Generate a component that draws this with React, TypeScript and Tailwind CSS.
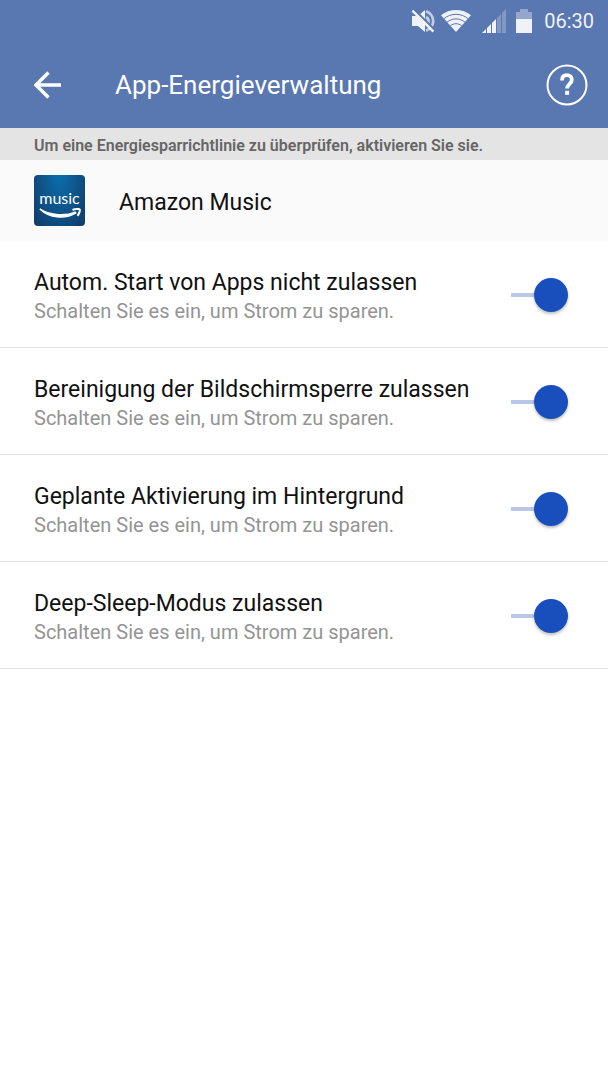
import { useState } from "react";

type PolicyId = "autostart" | "lockscreen" | "wakeup" | "deepsleep";

type Policy = {
  id: PolicyId;
  title: string;
};

const policies: Policy[] = [
  { id: "autostart", title: "Autom. Start von Apps nicht zulassen" },
  { id: "lockscreen", title: "Bereinigung der Bildschirmsperre zulassen" },
  { id: "wakeup", title: "Geplante Aktivierung im Hintergrund" },
  { id: "deepsleep", title: "Deep-Sleep-Modus zulassen" },
];

function MutedIcon() {
  return (
    <svg aria-hidden="true" viewBox="0 0 24 24" className="h-6 w-6">
      <path d="M1 7h6l7-6v22l-7-6H1z" fill="#f0f2f7" />
      <g fill="none" stroke="#c3cde2">
        <path d="M15 8a4.500 4.500 0 0 1 0 8" strokeWidth="3" />
        <path d="M15 2.400a10 10 0 0 1 0 19.200" strokeWidth="2.800" />
      </g>
      <path d="M3 .200 24 21.200" stroke="#5977b0" strokeWidth="2" />
      <path d="M1.400 1.600 22.400 22.600" stroke="#f0f2f7" strokeWidth="2.400" />
    </svg>
  );
}

function WifiIcon() {
  return (
    <svg aria-hidden="true" viewBox="0 0 30 22" className="h-[22px] w-[30px]">
      <path d="M15 22 0 5.200C8.500-1.700 21.500-1.700 30 5.200z" fill="#f0f2f7" />
      <g fill="none" stroke="#5977b0" strokeWidth="1">
        <path d="M3 8.600c7-5.700 17-5.700 24 0" />
        <path d="M6 12.200c5.300-4.400 12.700-4.400 18 0" />
        <path d="M9.300 15.800c3.400-2.800 8-2.800 11.400 0" />
      </g>
    </svg>
  );
}

function SignalIcon() {
  return (
    <svg aria-hidden="true" viewBox="0 0 24 24" className="h-6 w-6">
      <path d="M0 24l4-4v4zM5 19l4-4v9H5zM10 14l4-4v14h-4z" fill="#f0f2f7" />
      <path d="M15 9l4-4v19h-4zM20 4l4-4v24h-4z" fill="#8399c5" />
    </svg>
  );
}

function BatteryIcon() {
  return (
    <svg aria-hidden="true" viewBox="0 0 16 24" className="h-6 w-4">
      <path d="M0 3h4V0h8v3h4v7H0z" fill="#93a6cd" />
      <path d="M0 10h16v14H0z" fill="#f0f2f7" />
    </svg>
  );
}

function BackIcon() {
  return (
    <svg
      aria-hidden="true"
      viewBox="0 0 28 28"
      className="h-7 w-7"
      fill="none"
      stroke="currentColor"
      strokeWidth="3.400"
    >
      <path d="M27 14H3M14.500 1.500 2 14l12.500 12.500" />
    </svg>
  );
}

function HelpIcon() {
  return (
    <svg
      aria-hidden="true"
      viewBox="0 0 42 42"
      className="h-[42px] w-[42px]"
      fill="none"
      stroke="currentColor"
    >
      <circle cx="21" cy="21" r="19.500" strokeWidth="2" />
      <path
        d="M16 16.400c0-3.600 2-5.200 4.900-5.200s4.900 1.700 4.900 4.500c0 4-4.700 4.600-4.700 8.700"
        strokeWidth="3.800"
      />
      <path d="M19.100 26.800h4v4h-4z" fill="currentColor" stroke="none" />
    </svg>
  );
}

function MusicLogo() {
  return (
    <div className="flex h-[51px] w-[51px] flex-col items-center rounded-[4px] bg-radial-[at_50%_0%] from-[#0a6fae] to-[#123a66] pt-[13px]">
      <span className="font-[Lato,sans-serif] text-[16px] leading-5 text-white">
        music
      </span>
      <svg
        aria-hidden="true"
        viewBox="0 0 42 11"
        className="h-[11px] w-[42px]"
        fill="none"
        stroke="#fff"
      >
        <path
          d="M.800 1C10 10 26 11.800 37 5l-.8-1C26 8.400 12 7.400.800 1z"
          fill="#fff"
          strokeWidth="1.200"
        />
        <path
          d="M33.500 2c3-1.300 6.700-1.300 7.200-.5s-.4 4-2.200 6.300"
          strokeWidth="2"
        />
      </svg>
    </div>
  );
}

function StatusBar() {
  return (
    <div className="flex h-[42px] items-center justify-end pr-[14px] text-[#f0f2f7]">
      <MutedIcon />
      <span className="ml-[6px]">
        <WifiIcon />
      </span>
      <span className="ml-[11px]">
        <SignalIcon />
      </span>
      <span className="ml-[10px]">
        <BatteryIcon />
      </span>
      <span className="ml-3 text-[20px] leading-6">06:30</span>
    </div>
  );
}

type PolicyRowProps = {
  policy: Policy;
  checked: boolean;
  onChange: (checked: boolean) => void;
};

function PolicyRow({ policy, checked, onChange }: PolicyRowProps) {
  return (
    <li className="flex items-center justify-between border-b border-[#e2e2e2] pt-6 pr-10 pb-[22px] pl-[34px]">
      <div className="min-w-0 pt-1">
        <label
          htmlFor={policy.id}
          className="block text-[23px] leading-7 text-[#111]"
        >
          {policy.title}
        </label>
        <p
          id={`${policy.id}-hint`}
          className="text-[20px] leading-7 text-[#949494]"
        >
          Schalten Sie es ein, um Strom zu sparen.
        </p>
      </div>

      <input
        id={policy.id}
        type="checkbox"
        role="switch"
        aria-describedby={`${policy.id}-hint`}
        checked={checked}
        onChange={(event) => onChange(event.target.checked)}
        className="flex shrink-0 cursor-pointer appearance-none flex-row-reverse items-center before:h-1 before:w-[23px] before:bg-neutral-300 after:h-[34px] after:w-[34px] after:rounded-full after:bg-neutral-100 after:shadow-[0_2px_3px_rgba(0,0,0,0.25)] checked:flex-row checked:before:bg-[#b9c7e8] checked:after:bg-[#194fbd]"
      />
    </li>
  );
}

export default function App() {
  const [enabled, setEnabled] = useState<Record<PolicyId, boolean>>({
    autostart: true,
    lockscreen: true,
    wakeup: true,
    deepsleep: true,
  });

  return (
    <div className="min-h-screen bg-white font-[Roboto,sans-serif]">
      <header className="bg-[#5977b0] text-white">
        <StatusBar />
        <div className="flex h-[86px] items-center pr-5 pl-[34px]">
          <button type="button" aria-label="Zurück">
            <BackIcon />
          </button>
          <h1 className="ml-[53px] flex-1 text-[26px] leading-8">
            App-Energieverwaltung
          </h1>
          <button type="button" aria-label="Hilfe">
            <HelpIcon />
          </button>
        </div>
      </header>

      <main>
        <p className="bg-[#e4e4e4] px-[34px] pt-[6px] pb-[2px] text-[16px] leading-6 font-semibold text-[#666]">
          Um eine Energiesparrichtlinie zu überprüfen, aktivieren Sie sie.
        </p>

        <div className="flex items-center bg-[#fafafa] px-[34px] py-[15px]">
          <MusicLogo />
          <h2 className="ml-[34px] pt-1 text-[23px] leading-7 text-[#111]">
            Amazon Music
          </h2>
        </div>

        <ul>
          {policies.map((policy) => (
            <PolicyRow
              key={policy.id}
              policy={policy}
              checked={enabled[policy.id]}
              onChange={(checked) =>
                setEnabled((current) => ({ ...current, [policy.id]: checked }))
              }
            />
          ))}
        </ul>
      </main>
    </div>
  );
}
